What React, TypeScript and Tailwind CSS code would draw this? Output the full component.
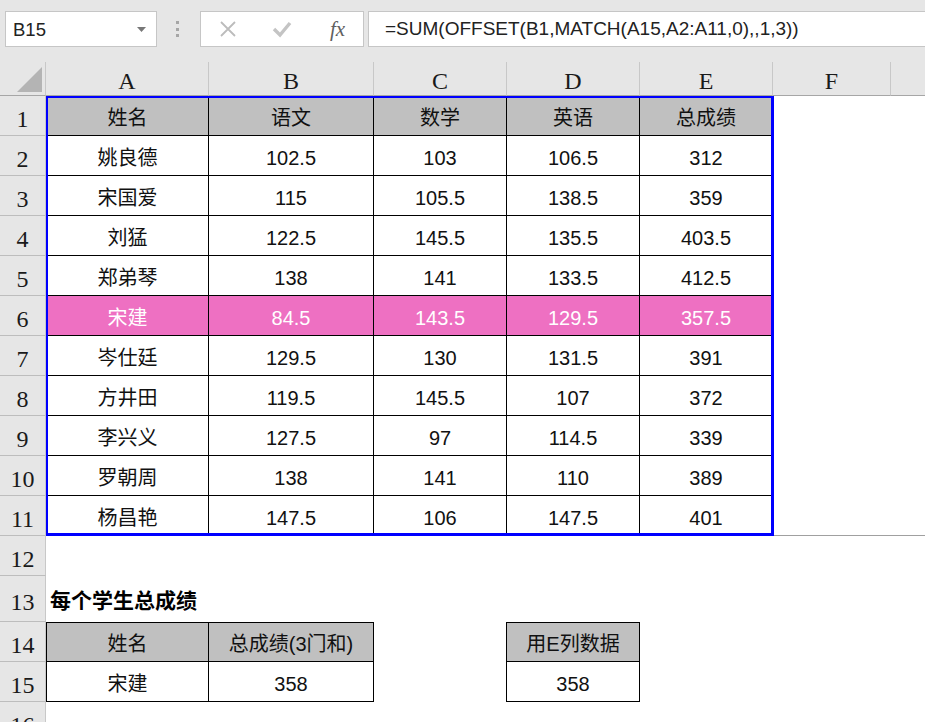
import React from 'react';

const COLS = ['A', 'B', 'C', 'D', 'E', 'F', ''];

const scores: string[][] = [
  ['姓名', '语文', '数学', '英语', '总成绩'],
  ['姚良德', '102.5', '103', '106.5', '312'],
  ['宋国爱', '115', '105.5', '138.5', '359'],
  ['刘猛', '122.5', '145.5', '135.5', '403.5'],
  ['郑弟琴', '138', '141', '133.5', '412.5'],
  ['宋建', '84.5', '143.5', '129.5', '357.5'],
  ['岑仕廷', '129.5', '130', '131.5', '391'],
  ['方井田', '119.5', '145.5', '107', '372'],
  ['李兴义', '127.5', '97', '114.5', '339'],
  ['罗朝周', '138', '141', '110', '389'],
  ['杨昌艳', '147.5', '106', '147.5', '401'],
];

const cellFont = "font-['Liberation_Sans','Noto_Sans_CJK_SC',sans-serif]";
const headFont = "font-['Liberation_Serif','DejaVu_Serif',serif]";

function RowHead({ n }: { n: number }) {
  return (
    <div
      className={`${headFont} flex items-center justify-center pt-[7px] bg-[#e6e6e6] border-r border-b border-r-[#c8c8c8] border-b-[#bdbdbd] text-[24px] text-[#1a1a1a]`}
    >
      {n}
    </div>
  );
}

type CellProps = {
  text?: string;
  box?: boolean;
  top?: boolean;
  left?: boolean;
  gray?: boolean;
  pink?: boolean;
  rightOnly?: boolean;
  grayBottom?: boolean;
};

function Cell({ text, box, top, left, gray, pink, rightOnly, grayBottom }: CellProps) {
  const cls = [
    cellFont,
    'flex items-center justify-center pt-[4px] text-[20px] whitespace-nowrap',
    box ? 'border-r border-b border-black' : '',
    box && top ? 'border-t' : '',
    box && left ? 'border-l' : '',
    rightOnly ? 'border-r border-black' : '',
    grayBottom ? 'border-b border-[#a0a0a0]' : '',
    gray ? 'bg-[#c0c0c0] text-[#111]' : pink ? 'bg-[#ee70c2] text-white' : 'bg-white text-[#111]',
  ].join(' ');
  return <div className={cls}>{text}</div>;
}

function Toolbar() {
  return (
    <div className="h-[62px] bg-[#e6e6e6] flex items-start pt-[11px] pl-[5px]">
      <div className="w-[152px] h-[36px] bg-white border border-[#c6c6c6] flex items-center justify-between pl-[7px] pr-[10px]">
        <span className={`${cellFont} text-[18.5px] text-[#222] pt-[1px]`}>B15</span>
        <svg width="9" height="5" viewBox="0 0 9 5">
          <polygon points="0,0 9,0 4.5,5" fill="#777" />
        </svg>
      </div>
      <div className="ml-[19px] mt-[10px] flex flex-col gap-[3.5px]">
        <span className="block w-[3px] h-[3px] bg-[#a6a6a6]" />
        <span className="block w-[3px] h-[3px] bg-[#a6a6a6]" />
        <span className="block w-[3px] h-[3px] bg-[#a6a6a6]" />
      </div>
      <div className="ml-[21px] w-[164px] h-[36px] bg-white border border-[#c6c6c6] flex items-center">
        <div className="w-[54px] flex justify-center">
          <svg width="18" height="18" viewBox="0 0 18 18">
            <path d="M2 2 L16 16 M16 2 L2 16" stroke="#bcbcbc" strokeWidth="1.8" fill="none" />
          </svg>
        </div>
        <div className="w-[54px] flex justify-center">
          <svg width="20" height="18" viewBox="0 0 20 18">
            <path d="M2 9 L8 15 L18 3" stroke="#c4c4c4" strokeWidth="3.4" fill="none" />
          </svg>
        </div>
        <div className="w-[54px] flex justify-center pl-[3px]">
          <span className="font-['Liberation_Serif',serif] italic text-[21px] text-[#606060] leading-none">
            fx
          </span>
        </div>
      </div>
      <div className="ml-[4px] flex-1 h-[36px] bg-white border border-r-0 border-[#c6c6c6] flex items-center pl-[16px]">
        <span className={`${cellFont} text-[19px] text-[#222] pt-[1px] whitespace-nowrap`}>
          =SUM(OFFSET(B1,MATCH(A15,A2:A11,0),,1,3))
        </span>
      </div>
    </div>
  );
}

function ColumnHeaders() {
  return (
    <>
      <div className="bg-[#e6e6e6] border-r border-b border-r-[#c8c8c8] border-b-[#a6a6a6] flex items-end justify-end pr-[3px] pb-[3px]">
        <svg width="25" height="25" viewBox="0 0 25 25">
          <polygon points="25,0 25,25 0,25" fill="#b4b4b4" />
        </svg>
      </div>
      {COLS.map((c, i) => (
        <div
          key={i}
          className={`${headFont} bg-[#e6e6e6] border-b border-b-[#a6a6a6] ${
            i < COLS.length - 1 ? 'border-r border-r-[#c8c8c8]' : ''
          } flex items-center justify-center pt-[4px] text-[24px] text-[#1a1a1a]`}
        >
          {c}
        </div>
      ))}
    </>
  );
}

export default function App() {
  return (
    <div className="w-[925px] h-[722px] overflow-hidden bg-white">
      <Toolbar />
      <div className="relative grid grid-cols-[46px_163px_165px_133px_133px_133px_118px_1fr] grid-rows-[34px_repeat(12,40px)_46px_40px_40px_40px]">
        <ColumnHeaders />

        {scores.map((row, r) => (
          <React.Fragment key={r}>
            <RowHead n={r + 1} />
            {row.map((t, c) => (
              <Cell
                key={c}
                text={t}
                box
                top={r === 0}
                left={c === 0}
                gray={r === 0}
                pink={r === 5}
              />
            ))}
            <Cell grayBottom={r === 10} />
            <Cell grayBottom={r === 10} />
          </React.Fragment>
        ))}

        {/* row 12 */}
        <RowHead n={12} />
        {COLS.map((_, i) => (
          <Cell key={i} />
        ))}

        {/* row 13 */}
        <RowHead n={13} />
        <div className={`${cellFont} flex items-center pt-[4px] pl-[4px] text-[21px] font-bold text-black whitespace-nowrap overflow-visible`}>
          每个学生总成绩
        </div>
        {COLS.slice(1).map((_, i) => (
          <Cell key={i} />
        ))}

        {/* row 14 */}
        <RowHead n={14} />
        <Cell text="姓名" box top left gray />
        <Cell text="总成绩(3门和)" box top gray />
        <Cell rightOnly />
        <Cell text="用E列数据" box top gray />
        <Cell />
        <Cell />
        <Cell />

        {/* row 15 */}
        <RowHead n={15} />
        <Cell text="宋建" box left />
        <Cell text="358" box />
        <Cell rightOnly />
        <Cell text="358" box />
        <Cell />
        <Cell />
        <Cell />

        {/* row 16 */}
        <RowHead n={16} />
        {COLS.map((_, i) => (
          <Cell key={i} />
        ))}

        {/* selection outline over A1:E11 */}
        <div className="absolute left-[46px] top-[34px] w-[728px] h-[440px] border-l-2 border-t-2 border-r-[3px] border-b-[3px] border-[#0000ff] pointer-events-none" />
      </div>
    </div>
  );
}
